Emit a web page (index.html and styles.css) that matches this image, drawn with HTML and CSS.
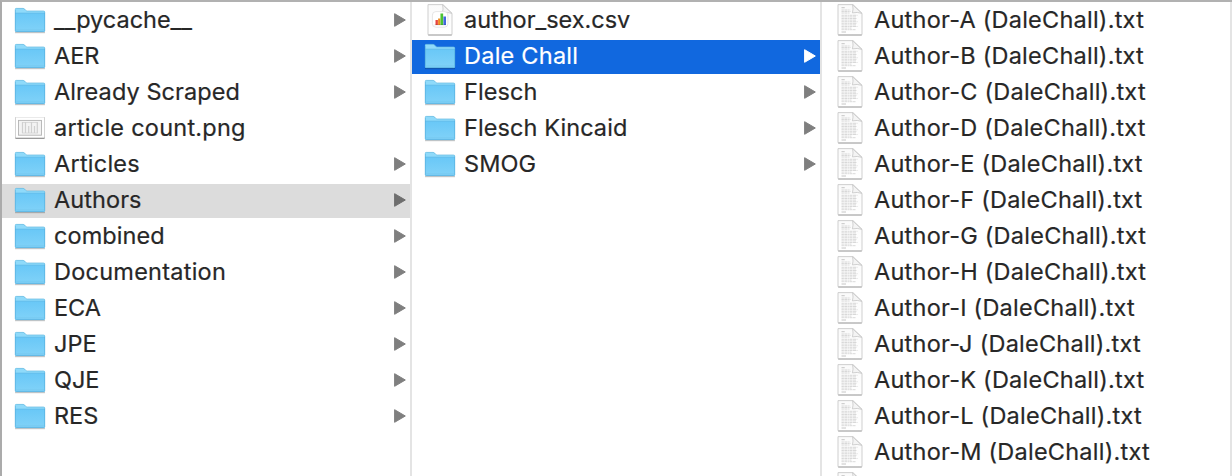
FILE: index.html
```html
<!DOCTYPE html>
<html lang="en">
<head>
<meta charset="utf-8">
<title>Authors</title>
<link rel="stylesheet" href="styles.css">
</head>
<body>
<svg class="defs" aria-hidden="true">
  <defs>
    <linearGradient id="face" x1="0" y1="0" x2="0" y2="1"><stop offset="0" stop-color="#69c8f7"/><stop offset="1" stop-color="#81d2f8"/></linearGradient>
    <linearGradient id="page" x1="0" y1="0" x2="0" y2="1"><stop offset="0" stop-color="#fafafa"/><stop offset="1" stop-color="#ffffff"/></linearGradient>
  </defs>
  <symbol id="folder" viewBox="0 0 32 34">
    <path d="M1 28.5h30" stroke="#000" stroke-opacity=".22" stroke-width="1.4"/>
    <path d="M1 5.6Q1 4.3 2.3 4.3H9q1 0 1.7.8l1 1.1q.6.7 1.6.7h16.2q1.5 0 1.5 1.4V27H1z" fill="#8fdafa"/>
    <path d="M1 9.3h30v17.5q0 1.2-1.2 1.2H2.2Q1 28 1 26.8z" fill="url(#face)"/>
    <path d="M1.2 5.6Q1.2 4.4 2.3 4.4H9q1 0 1.7.8l1 1.1q.6.7 1.6.7h16.2q1.3 0 1.3 1.3" fill="none" stroke="#62b7df" stroke-width=".7"/>
    <path d="M1 9.2h30" stroke="#5cb9e7" stroke-width=".8"/>
    <path d="M1.3 6v20.6q0 1 1 1h27.4q1 0 1-1V8.5" fill="none" stroke="#54addb" stroke-width=".7"/>
    <path d="M2 26h28" stroke="#70c3ea" stroke-width=".6"/>
  </symbol>
  <symbol id="sheet" viewBox="0 0 32 34">
    <path d="M4 .6h15l9 8.7v20.9q0 .8-.8.8H4.8q-.8 0-.8-.8z" fill="url(#page)" stroke="#c9c9c9" stroke-width=".9"/>
    <path d="M4.2 31h23.6" stroke="#aaa" stroke-width="1"/>
    <path d="M18.6.8q1 4.5-.2 8.1 5-1.2 9.4.5z" fill="#f4f4f4" stroke="#c6c6c6" stroke-width=".8"/>
  </symbol>
  <symbol id="text" viewBox="0 0 32 34">
    <use href="#sheet" width="32" height="34"/>
    <g fill="none" stroke="#c4c4c4" stroke-width=".65">
      <path d="M7.5 3.7h3.2M7.5 28h4.5" stroke="#a8a8a8"/>
      <path d="M7.5 6h8.7M7.5 7.5h9M7.5 9h8M7.5 11.3h16M7.5 12.9h14.5M7.5 14.5h15.5M7.5 16.1h15M7.5 17.7h16M7.5 19.3h15.5M7.5 20.9h14.5M7.5 22.5h16M7.5 24.1h10M7.5 25.7h14" stroke-dasharray="2.4 .5 3.1 .6 1.5 .4"/>
    </g>
  </symbol>
  <symbol id="csv" viewBox="0 0 32 34">
    <use href="#sheet" width="32" height="34"/>
    <rect x="8.4" y="7.6" width="15.5" height="15.6" rx="3.5" fill="#fff" stroke="#dedede" stroke-width=".8"/>
    <path d="M12.7 21v-5" stroke="#e8453c" stroke-width="2.4"/>
    <path d="M15.2 21v-6.5" stroke="#ee8b20" stroke-width="2.2"/>
    <path d="M17.8 21V9.5" stroke="#4bc332" stroke-width="2.7"/>
    <path d="M20.7 21v-8.5" stroke="#4268dc" stroke-width="2.6"/>
    <path d="M10.5 20.8h11.5" stroke="#000" stroke-opacity=".18" stroke-width=".8"/>
  </symbol>
  <symbol id="png" viewBox="0 0 32 34">
    <rect x="1.1" y="4.9" width="29.8" height="21.6" rx=".6" fill="#c9c9c9"/>
    <path d="M1.5 26.2h29" stroke="#858585" stroke-width="1.2"/>
    <rect x="1.9" y="5.4" width="28.2" height="20.2" fill="#fff"/>
    <rect x="4.5" y="8.4" width="23" height="14.8" fill="#f3f3f3" stroke="#b3b3b3" stroke-width=".9"/>
    <path d="M8 10.5h15M8 21h16" stroke="#dadada"/>
    <path d="M8.5 10v11M11.5 10v11M14.7 14v7M17.5 10v11M20.5 14v7M23.3 10v11" stroke="#d0d0d0" stroke-width="1.2"/>
  </symbol>
  <symbol id="arrow" viewBox="0 0 12 14">
    <path d="M.6.7 11.3 7 .6 13.3z" fill="currentColor" stroke="currentColor" stroke-width="1" stroke-linejoin="round"/>
  </symbol>
</svg>
<main class="browser">
  <ul class="column">
    <li class="row"><svg class="icon"><use href="#folder"/></svg><span class="name tight">__pycache__</span><svg class="arrow"><use href="#arrow"/></svg></li>
    <li class="row"><svg class="icon"><use href="#folder"/></svg><span class="name tight">AER</span><svg class="arrow"><use href="#arrow"/></svg></li>
    <li class="row"><svg class="icon"><use href="#folder"/></svg><span class="name">Already Scraped</span><svg class="arrow"><use href="#arrow"/></svg></li>
    <li class="row"><svg class="icon"><use href="#png"/></svg><span class="name loose">article count.png</span></li>
    <li class="row"><svg class="icon"><use href="#folder"/></svg><span class="name loose">Articles</span><svg class="arrow"><use href="#arrow"/></svg></li>
    <li class="row open"><svg class="icon"><use href="#folder"/></svg><span class="name">Authors</span><svg class="arrow"><use href="#arrow"/></svg></li>
    <li class="row"><svg class="icon"><use href="#folder"/></svg><span class="name">combined</span><svg class="arrow"><use href="#arrow"/></svg></li>
    <li class="row"><svg class="icon"><use href="#folder"/></svg><span class="name loose">Documentation</span><svg class="arrow"><use href="#arrow"/></svg></li>
    <li class="row"><svg class="icon"><use href="#folder"/></svg><span class="name tight">ECA</span><svg class="arrow"><use href="#arrow"/></svg></li>
    <li class="row"><svg class="icon"><use href="#folder"/></svg><span class="name tight">JPE</span><svg class="arrow"><use href="#arrow"/></svg></li>
    <li class="row"><svg class="icon"><use href="#folder"/></svg><span class="name tight">QJE</span><svg class="arrow"><use href="#arrow"/></svg></li>
    <li class="row"><svg class="icon"><use href="#folder"/></svg><span class="name tight">RES</span><svg class="arrow"><use href="#arrow"/></svg></li>
  </ul>
  <ul class="column">
    <li class="row"><svg class="icon"><use href="#csv"/></svg><span class="name tight">author_sex.csv</span></li>
    <li class="row selected"><svg class="icon"><use href="#folder"/></svg><span class="name loose">Dale Chall</span><svg class="arrow"><use href="#arrow"/></svg></li>
    <li class="row"><svg class="icon"><use href="#folder"/></svg><span class="name">Flesch</span><svg class="arrow"><use href="#arrow"/></svg></li>
    <li class="row"><svg class="icon"><use href="#folder"/></svg><span class="name">Flesch Kincaid</span><svg class="arrow"><use href="#arrow"/></svg></li>
    <li class="row"><svg class="icon"><use href="#folder"/></svg><span class="name">SMOG</span><svg class="arrow"><use href="#arrow"/></svg></li>
  </ul>
  <ul class="column files">
    <li class="row"><svg class="icon"><use href="#text"/></svg><span class="name">Author-A (DaleChall).txt</span></li>
    <li class="row"><svg class="icon"><use href="#text"/></svg><span class="name">Author-B (DaleChall).txt</span></li>
    <li class="row"><svg class="icon"><use href="#text"/></svg><span class="name">Author-C (DaleChall).txt</span></li>
    <li class="row"><svg class="icon"><use href="#text"/></svg><span class="name">Author-D (DaleChall).txt</span></li>
    <li class="row"><svg class="icon"><use href="#text"/></svg><span class="name">Author-E (DaleChall).txt</span></li>
    <li class="row"><svg class="icon"><use href="#text"/></svg><span class="name">Author-F (DaleChall).txt</span></li>
    <li class="row"><svg class="icon"><use href="#text"/></svg><span class="name">Author-G (DaleChall).txt</span></li>
    <li class="row"><svg class="icon"><use href="#text"/></svg><span class="name">Author-H (DaleChall).txt</span></li>
    <li class="row"><svg class="icon"><use href="#text"/></svg><span class="name">Author-I (DaleChall).txt</span></li>
    <li class="row"><svg class="icon"><use href="#text"/></svg><span class="name">Author-J (DaleChall).txt</span></li>
    <li class="row"><svg class="icon"><use href="#text"/></svg><span class="name">Author-K (DaleChall).txt</span></li>
    <li class="row"><svg class="icon"><use href="#text"/></svg><span class="name">Author-L (DaleChall).txt</span></li>
    <li class="row"><svg class="icon"><use href="#text"/></svg><span class="name">Author-M (DaleChall).txt</span></li>
    <li class="row"><svg class="icon"><use href="#text"/></svg></li>
  </ul>
</main>
</body>
</html>
```
FILE: styles.css
```css
* { box-sizing: border-box; }
body {
  margin: 0;
  background: #fff;
  color: #272727;
  font-family: Inter, "Liberation Sans", sans-serif;
  font-size: 23.5px;
  overflow: hidden;
}
.defs { position: absolute; width: 0; height: 0; }
.browser {
  display: grid;
  grid-template-columns: 410px 410px 410px;
  height: 476px;
  border-top: 2px solid #b1b1b1;
  border-left: 2px solid #ababab;
  overflow: hidden;
}
.column {
  display: flex;
  flex-direction: column;
  gap: 2px;
  margin: 0;
  padding: 2px 0 0;
  border-right: 2px solid #e4e4e4;
  list-style: none;
}
.row {
  display: flex;
  flex: none;
  align-items: center;
  height: 34px;
  padding: 0 4px 0 12px;
}
.icon { flex: none; width: 32px; height: 34px; margin-right: 8px; }
.name {
  flex: 1;
  line-height: 30px;
  padding-bottom: 2px;
  white-space: nowrap;
  letter-spacing: .08px;
  -webkit-text-stroke: .2px currentColor;
}
.loose, .files .name { letter-spacing: .24px; }
.tight { letter-spacing: -.02px; }
.arrow { flex: none; width: 12px; height: 14px; margin-bottom: 2px; color: #7f7f7f; }
.open { background: #dcdcdc; }
.open .arrow { color: #6e6e6e; }
.selected { background: #1168df; color: #fff; }
.selected .arrow { color: #fff; }
```
